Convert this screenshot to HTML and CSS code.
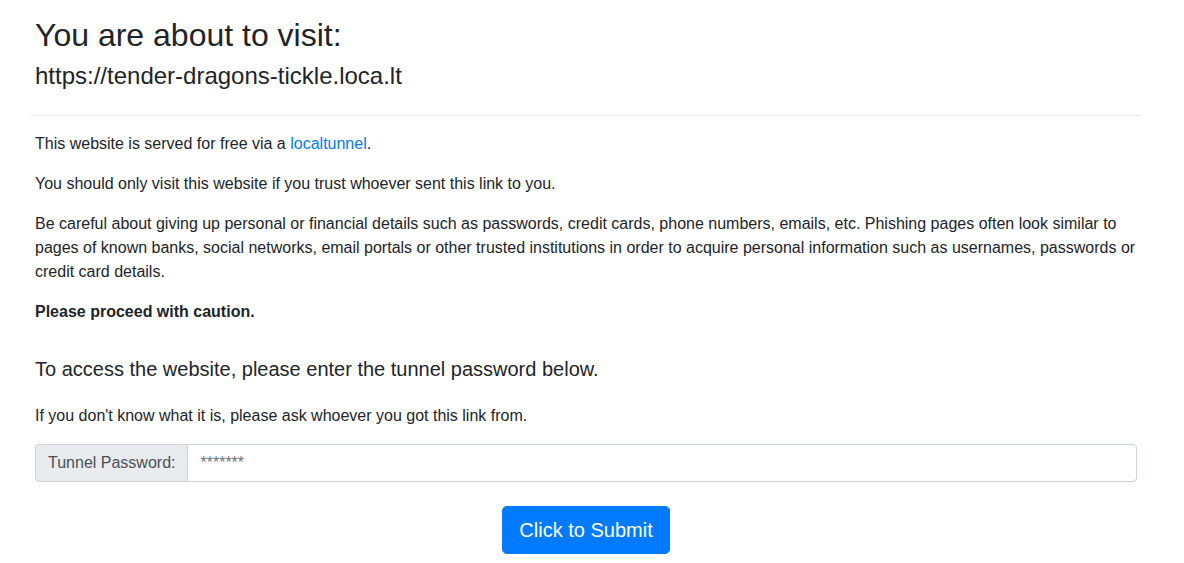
FILE: index.html
```html
<!DOCTYPE html>
<html lang="en">
<head>
<meta charset="utf-8">
<title>localtunnel</title>
<link rel="stylesheet" href="styles.css">
</head>
<body>
<div class="container">
  <header class="intro">
    <h1 class="title">You are about to visit:</h1>
    <h2 class="url">https://tender-dragons-tickle.loca.lt</h2>
  </header>
  <hr class="divider">
  <main class="content">
    <p>This website is served for free via a <a href="#">localtunnel</a>.</p>
    <p>You should only visit this website if you trust whoever sent this link to you.</p>
    <p>Be careful about giving up personal or financial details such as passwords, credit cards, phone numbers, emails, etc. Phishing pages often look similar to pages of known banks, social networks, email portals or other trusted institutions in order to acquire personal information such as usernames, passwords or credit card details.</p>
    <p class="strong">Please proceed with caution.</p>
    <h3 class="access">To access the website, please enter the tunnel password below.</h3>
    <p>If you don't know what it is, please ask whoever you got this link from.</p>
    <form class="form" onsubmit="return false;">
      <div class="input-group">
        <span class="addon">Tunnel Password:</span>
        <input class="field" type="text" placeholder="*******">
      </div>
      <div class="actions">
        <button class="btn" type="submit">Click to Submit</button>
      </div>
    </form>
  </main>
</div>
</body>
</html>
```
FILE: styles.css
```css
* { box-sizing: border-box; }
html, body { margin: 0; padding: 0; background: #fff; }
body {
  font-family: "Liberation Sans", Arial, sans-serif;
  font-size: 16px;
  line-height: 1.5;
  color: #212529;
}
.container {
  width: 1110px;
  margin-left: 31px;
  padding-top: 16px;
}
.intro, .content { padding: 0 4px; }
.intro { padding-bottom: 8px; }
.title {
  margin: 0 0 8px;
  font-size: 32px;
  font-weight: 500;
  line-height: 1.2;
}
.url {
  margin: 0;
  font-size: 24px;
  font-weight: 500;
  line-height: 1.2;
}
.divider {
  margin: 16px 0;
  border: 0;
  border-top: 1px solid rgba(0,0,0,.1);
}
p { margin: 0 0 16px; }
a { color: #007bff; text-decoration: none; }
.strong { font-weight: 700; }
.access {
  margin: 33px 0 23px;
  font-size: 20px;
  font-weight: 500;
  line-height: 1.2;
}
.form { margin-top: 16px; }
.input-group { display: flex; height: 38px; }
.addon {
  display: flex;
  align-items: center;
  padding: 6px 12px;
  background: #e9ecef;
  color: #495057;
  border: 1px solid #ced4da;
  border-radius: 4px 0 0 4px;
  font-size: 16px;
  line-height: 1.5;
}
.field {
  flex: 1;
  min-width: 0;
  margin-left: -1px;
  padding: 6px 12px;
  border: 1px solid #ced4da;
  border-radius: 0 4px 4px 0;
  font-family: inherit;
  font-size: 16px;
  line-height: 1.5;
  color: #495057;
}
.field::placeholder { color: #6c757d; opacity: 1; }
.actions {
  display: flex;
  justify-content: center;
  margin-top: 24px;
}
.btn {
  height: 48px;
  padding: 8px 16px;
  font-family: inherit;
  font-size: 20px;
  line-height: 1.5;
  color: #fff;
  background: #007bff;
  border: 1px solid #007bff;
  border-radius: 4.8px;
  cursor: pointer;
}
```
